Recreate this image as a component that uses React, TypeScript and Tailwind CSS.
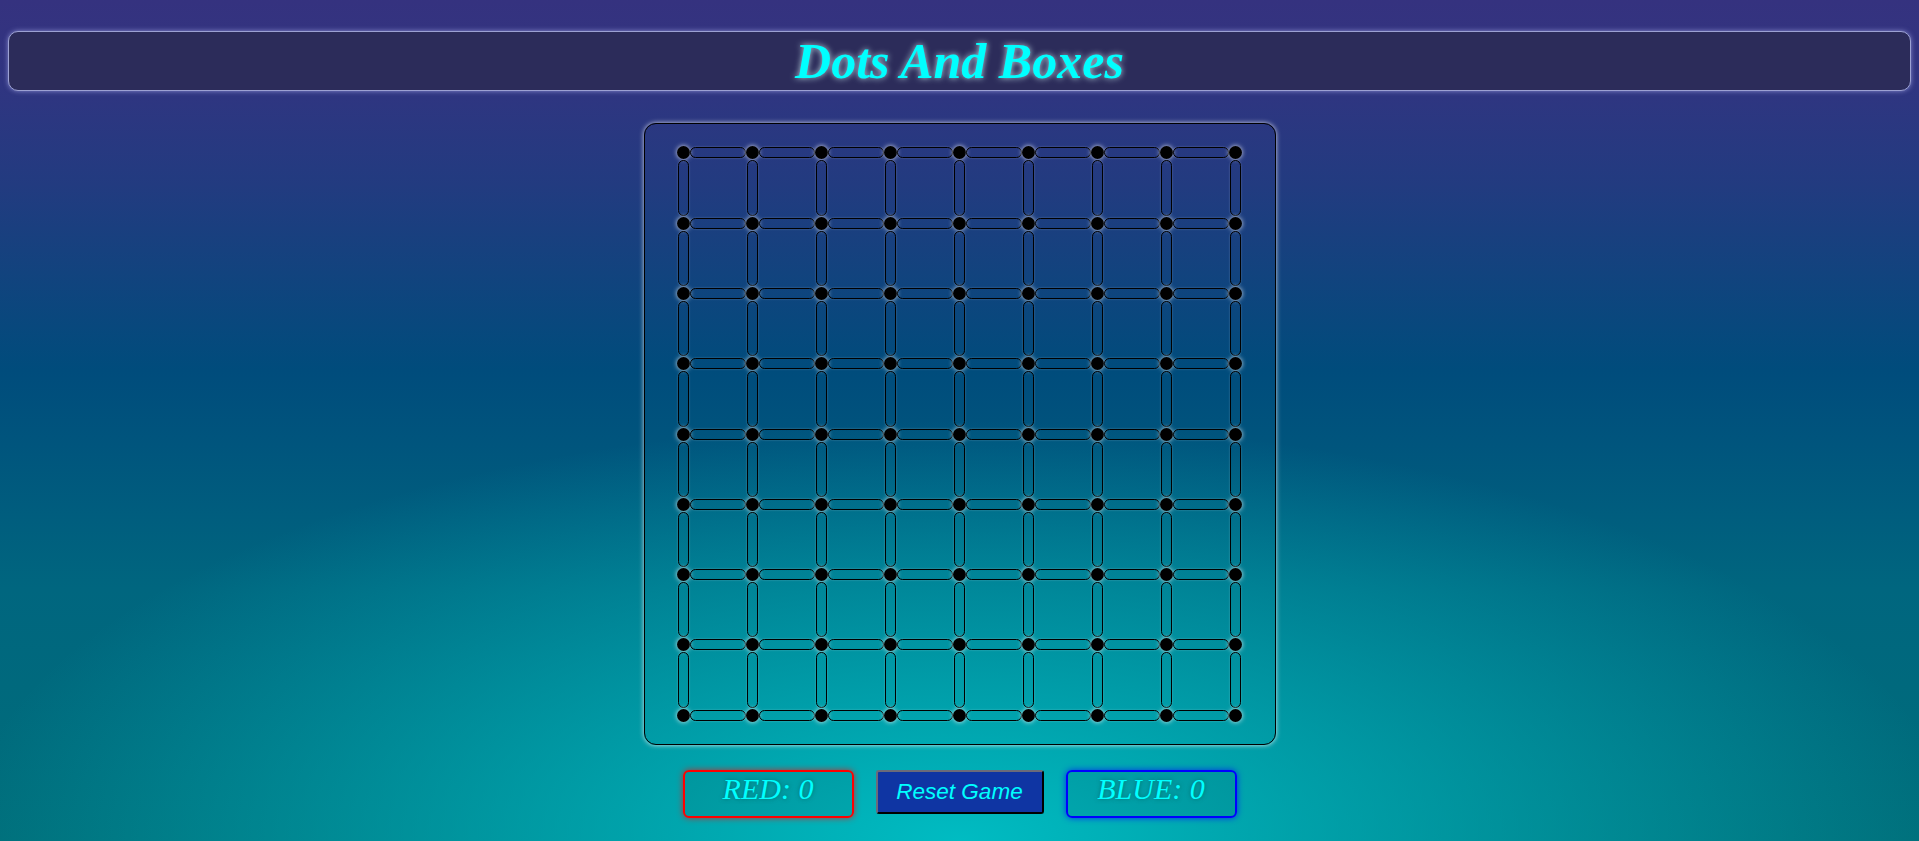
import React from "react";

const N = 9;

function DotRow() {
  const items: React.ReactNode[] = [];
  for (let c = 0; c < N; c++) {
    items.push(
      <div
        key={`d${c}`}
        className="w-[13px] h-[13px] rounded-full bg-black shadow-[0_0_5px_rgba(255,255,255,0.85)] shrink-0"
      />
    );
    if (c < N - 1) {
      items.push(
        <div
          key={`h${c}`}
          className="w-[56px] h-[11px] rounded-full border-[1.8px] border-black shadow-[0_0_2px_rgba(255,255,255,0.3)] shrink-0"
        />
      );
    }
  }
  return <div className="flex items-center h-[13px]">{items}</div>;
}

function VRow() {
  const items: React.ReactNode[] = [];
  for (let c = 0; c < N; c++) {
    items.push(
      <div key={`v${c}`} className="w-[13px] h-full py-[1px] flex justify-center shrink-0">
        <div className="w-[11.5px] h-full rounded-full border-[1.8px] border-black shadow-[0_0_2px_rgba(255,255,255,0.3)]" />
      </div>
    );
    if (c < N - 1) {
      items.push(<div key={`s${c}`} className="w-[56px] h-full shrink-0" />);
    }
  }
  return <div className="flex h-[57.3px]">{items}</div>;
}

function Grid() {
  const rows: React.ReactNode[] = [];
  for (let r = 0; r < N; r++) {
    rows.push(<DotRow key={`r${r}`} />);
    if (r < N - 1) rows.push(<VRow key={`vr${r}`} />);
  }
  return <div className="flex flex-col">{rows}</div>;
}

export default function App() {
  return (
    <div className="min-h-screen w-full overflow-hidden bg-[#00707a] bg-[image:radial-gradient(ellipse_52%_50%_at_50%_100%,rgba(0,192,198,0.95)_0%,rgba(0,192,198,0)_100%),linear-gradient(to_bottom,#35327f_0%,#303581_10%,#223b80_22%,#004c7c_44%,#00667f_70%,#006e7a_100%)] pt-[31px]">
      <header className="mx-2 h-[60px] rounded-[10px] border border-[#9ca1d3] bg-[#2c2c5a] shadow-[0_0_5px_rgba(190,195,255,0.6)] flex items-center justify-center">
        <h1 className="font-['Liberation_Serif',serif] font-bold italic text-[50px] leading-none text-[#00ffff] [text-shadow:0_0_6px_rgba(220,255,255,0.8)]">
          Dots And Boxes
        </h1>
      </header>

      <div className="mx-auto mt-[32px] w-[632px] h-[622px] rounded-[12px] border border-black shadow-[0_0_5px_rgba(255,255,255,0.8)] flex items-center justify-center">
        <Grid />
      </div>

      <div className="mt-[25px] flex justify-center items-start gap-[22px]">
        <div className="w-[171px] h-[48px] rounded-[6px] border-2 border-[#ff0000] bg-[rgba(0,0,0,0.07)] shadow-[0_0_6px_rgba(255,0,0,0.7)] text-center font-['Liberation_Serif',serif] italic text-[30px] leading-[normal] text-[#00ffff] [text-shadow:0_0_4px_rgba(0,90,90,0.7)]">
          RED: 0
        </div>
        <button className="w-[168px] h-[44px] rounded-[3px] border-2 border-t-[#6b6b7a] border-l-[#6b6b7a] border-r-black border-b-black bg-[#0f35a3] font-['Liberation_Sans',sans-serif] italic text-[22.5px] leading-none text-[#00ffff]">
          Reset Game
        </button>
        <div className="w-[171px] h-[48px] rounded-[6px] border-2 border-[#0000ff] bg-[rgba(0,0,0,0.07)] shadow-[0_0_6px_rgba(0,0,255,0.7)] text-center font-['Liberation_Serif',serif] italic text-[30px] leading-[normal] text-[#00ffff] [text-shadow:0_0_4px_rgba(0,90,90,0.7)]">
          BLUE: 0
        </div>
      </div>
    </div>
  );
}
